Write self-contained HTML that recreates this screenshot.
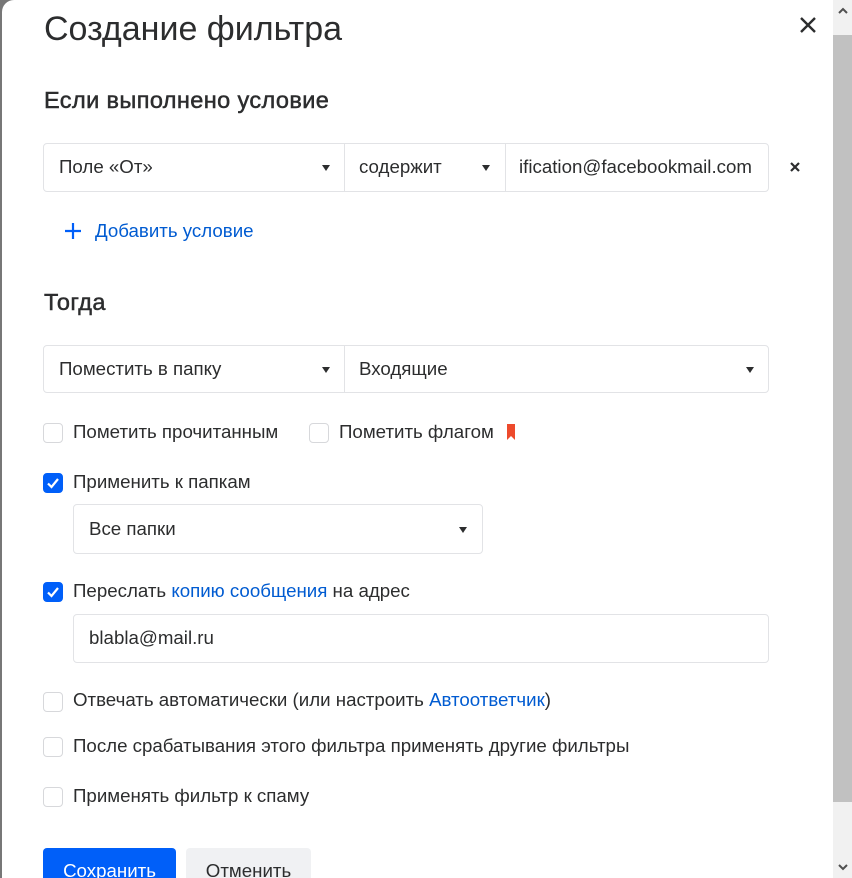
<!DOCTYPE html>
<html><head><meta charset="utf-8"><style>
*{box-sizing:border-box;margin:0;padding:0}
html,body{width:852px;height:878px;overflow:hidden}
body{background:#777;font-family:"Liberation Sans",sans-serif;color:#2c2d2e;position:relative}
.modal{position:absolute;left:2px;top:0;width:831px;height:878px;background:#fff;border-top-left-radius:12px;overflow:hidden}
.abs{position:absolute}
h1{position:absolute;left:42px;top:10px;font-size:34px;font-weight:400;color:#2c2d2e}
h2{position:absolute;font-size:23.5px;font-weight:400;color:#2c2d2e;-webkit-text-stroke:0.5px #2c2d2e;letter-spacing:0.4px}
.box{position:absolute;border:1px solid #e2e3e6;border-radius:4px;background:#fff;font-size:18.7px;line-height:46px;padding-left:15px}
.sep{position:absolute;top:0;bottom:0;width:1px;background:#e2e3e6}
.tri{position:absolute;width:0;height:0;border-left:4px solid transparent;border-right:4px solid transparent;border-top:6px solid #2c2d2e}
.cb{position:absolute;width:20px;height:20px;border:1px solid #d7d8db;border-radius:4px;background:#fff}
.cb.on{background:#005ff9;border-color:#005ff9}
.lbl{position:absolute;font-size:18.7px;color:#2c2d2e;white-space:nowrap}
a{color:#005bd1;text-decoration:none}
.btn{position:absolute;top:848px;height:44px;border-radius:4px;font-size:18.7px;line-height:46px;text-align:center}
</style></head><body>
<div class="modal">
<h1>Создание фильтра</h1>
<svg class="abs" style="left:796px;top:15px" width="20" height="20" viewBox="0 0 20 20"><path d="M3 3L17 17M17 3L3 17" stroke="#2c2d2e" stroke-width="2.4"/></svg>
<h2 style="left:42px;top:87px">Если выполнено условие</h2>
<div class="box" style="left:41px;top:143px;width:726px;height:49px">
 <span class="abs" style="left:15px;top:0">Поле «От»</span>
 <div class="tri" style="left:278px;top:21px"></div>
 <div class="sep" style="left:300px"></div>
 <span class="abs" style="left:315px;top:0">содержит</span>
 <div class="tri" style="left:438px;top:21px"></div>
 <div class="sep" style="left:461px"></div>
 <span class="abs" style="left:475px;top:0">ification@facebookmail.com</span>
</div>
<svg class="abs" style="left:787px;top:161px" width="12" height="12" viewBox="0 0 12 12"><path d="M2 2L10 10M10 2L2 10" stroke="#2c2d2e" stroke-width="2.2"/></svg>
<svg class="abs" style="left:61px;top:221px" width="20" height="20" viewBox="0 0 20 20"><path d="M10 2V18M2 10H18" stroke="#005ff9" stroke-width="2.2"/></svg>
<span class="lbl" style="left:93px;top:220px"><a>Добавить условие</a></span>
<h2 style="left:42px;top:289px">Тогда</h2>
<div class="box" style="left:41px;top:345px;width:726px;height:48px">
 <span class="abs" style="left:15px;top:0">Поместить в папку</span>
 <div class="tri" style="left:278px;top:21px"></div>
 <div class="sep" style="left:300px"></div>
 <span class="abs" style="left:315px;top:0">Входящие</span>
 <div class="tri" style="left:702px;top:21px"></div>
</div>
<div class="cb" style="left:41px;top:423px"></div>
<span class="lbl" style="left:71px;top:421px">Пометить прочитанным</span>
<div class="cb" style="left:307px;top:423px"></div>
<span class="lbl" style="left:337px;top:421px">Пометить флагом</span>
<svg class="abs" style="left:505px;top:424px" width="12" height="16" viewBox="0 0 12 16"><path d="M0 0H8V16L4 12L0 16Z" fill="#ed4a2c"/></svg>
<div class="cb on" style="left:41px;top:473px"><svg width="18" height="18" viewBox="0 0 18 18"><path d="M4 9.5L7.5 13L14 5" stroke="#fff" stroke-width="2.2" fill="none"/></svg></div>
<span class="lbl" style="left:71px;top:471px">Применить к папкам</span>
<div class="box" style="left:71px;top:504px;width:410px;height:50px;line-height:48px">
 <span class="abs" style="left:15px;top:0">Все папки</span>
 <div class="tri" style="left:385px;top:22px"></div>
</div>
<div class="cb on" style="left:41px;top:582px"><svg width="18" height="18" viewBox="0 0 18 18"><path d="M4 9.5L7.5 13L14 5" stroke="#fff" stroke-width="2.2" fill="none"/></svg></div>
<span class="lbl" style="left:71px;top:580px">Переслать <a>копию сообщения</a> на адрес</span>
<div class="box" style="left:71px;top:614px;width:696px;height:49px">
 <span class="abs" style="left:15px;top:0">blabla@mail.ru</span>
</div>
<div class="cb" style="left:41px;top:692px"></div>
<span class="lbl" style="left:71px;top:689px">Отвечать автоматически (или настроить <a>Автоответчик</a>)</span>
<div class="cb" style="left:41px;top:737px"></div>
<span class="lbl" style="left:71px;top:735px">После срабатывания этого фильтра применять другие фильтры</span>
<div class="cb" style="left:41px;top:787px"></div>
<span class="lbl" style="left:71px;top:785px">Применять фильтр к спаму</span>
<div class="btn" style="left:41px;width:133px;background:#005ff9;color:#fff">Сохранить</div>
<div class="btn" style="left:184px;width:125px;background:#f0f1f3;color:#2c2d2e">Отменить</div>
</div>
<div class="abs" style="left:833px;top:0;width:19px;height:878px;background:#f1f1f1"></div>
<div class="abs" style="left:833px;top:35px;width:19px;height:767px;background:#c1c1c1"></div>
<svg class="abs" style="left:836px;top:6px" width="14" height="10" viewBox="0 0 14 10"><path d="M3 7L7 3L11 7" stroke="#505050" stroke-width="2" fill="none"/></svg>
<svg class="abs" style="left:836px;top:862px" width="14" height="10" viewBox="0 0 14 10"><path d="M3 3L7 7L11 3" stroke="#505050" stroke-width="2" fill="none"/></svg>
</body></html>
